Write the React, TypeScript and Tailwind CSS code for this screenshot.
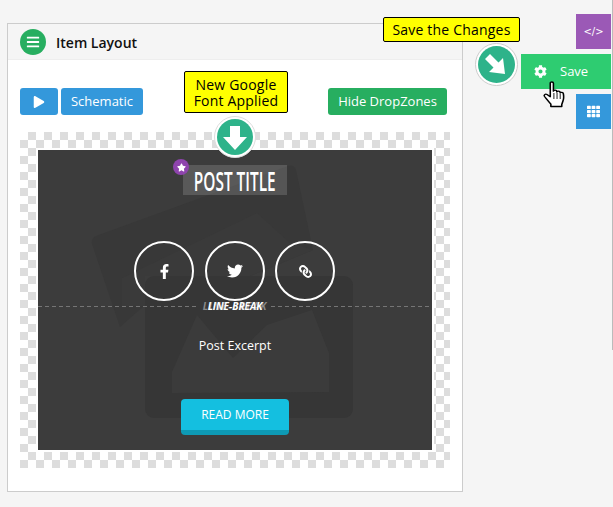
import { FaBars, FaCog, FaFacebookF, FaLink, FaPlay, FaStar, FaTh, FaTwitter } from "react-icons/fa";

const Hand = () => (
  <svg width="23" height="27" viewBox="0 0 19 27" preserveAspectRatio="none" className="absolute left-[22px] top-[27px]">
    <path
      d="M6 2.200c0-1.600 2.600-1.600 2.600 0v8c.3-1.400 2.700-1.300 2.800.2v.6c.4-1.300 2.600-1.200 2.800.3v.8c.5-1.100 2.400-.9 2.600.5 .3 2 .3 5.600-.3 7.400l-1 3.500v2H6.500v-2.300C5 20.800 3 18 1.300 15.500 .4 14.100 1.900 12.600 3.300 13.500L6 15.700z"
      fill="#fff"
      stroke="#000"
      strokeWidth="1.300"
      strokeLinejoin="round"
    />
    <path d="M9 12v6M11.600 12v6M14.200 13v5" stroke="#000" strokeWidth="0.800" />
  </svg>
);

const Watermark = () => (
  <svg width="394" height="300" viewBox="38 150 394 300" className="absolute left-0 top-0">
    <path d="M96 236 L288 166 Q294 164 296 170 L313 250 L250 276 L145 276 L145 305 L120 327 L92 244 Q91 238 96 236Z" fill="#383838" />
    <path d="M122 278 L257 213 L290 243 L313 250 L250 276 L145 276 L145 306 L122 306Z" fill="#3a3a3a" />
    <rect x="145" y="276" width="208" height="142" rx="9" fill="#363636" />
    <path d="M172 393 L172 372 L197 315 L233 358 L267 325 L312 310 L329 353 L329 392Z" fill="#3b3b3b" />
  </svg>
);

const Dashes = () => (
  <div className="h-px flex-1 bg-[repeating-linear-gradient(90deg,#757575_0_4px,transparent_4px_7px)]" />
);

export default function App() {
  return (
    <div className="relative flex h-[507px] w-[613px] items-start overflow-hidden bg-[#f5f5f5] font-['Open_Sans','Noto_Sans',sans-serif] text-black">
      <div className="ml-[7px] mt-[23px] h-[469px] w-[456px] border border-[#ccc] bg-white">
        <div className="flex h-[36px] items-center gap-[10px] border-b border-[#eee] bg-[#f5f5f5] pl-3">
          <span className="flex h-[26px] w-[26px] items-center justify-center rounded-full bg-[#27ae60] text-[14px] text-white">
            <FaBars />
          </span>
          <span className="pt-[2px] text-[14px] font-semibold text-[#111]">Item Layout</span>
        </div>

        <div className="px-3">
          <div className="mt-[28px] flex h-[27px] gap-[3px] text-[13px] text-white">
            <button className="flex w-[38px] items-center justify-center rounded-[3px] bg-[#3498db] text-[12px]">
              <FaPlay />
            </button>
            <button className="w-[82px] rounded-[3px] bg-[#3498db]">Schematic</button>
            <button className="ml-[182px] w-[119px] rounded-[3px] bg-[#27ae60]">Hide DropZones</button>
          </div>

          <div className="mt-[17px] h-[336px] w-[430px] bg-[conic-gradient(#ddd_25%,#fff_0_50%,#ddd_0_75%,#fff_0)] bg-[length:16px_16px] p-[18px]">
            <div className="relative flex h-[300px] w-[394px] flex-col items-center bg-[#3c3c3c] outline-2 outline-white">
              <Watermark />

              <div className="relative mt-[15px] flex h-[30px] w-[104px] items-center justify-center bg-white/15">
                <span className="inline-block scale-x-[0.57] whitespace-nowrap font-['Open_Sans',sans-serif] text-[27px] font-semibold leading-none text-white">
                  POST TITLE
                </span>
                <span className="absolute left-[-10px] top-[-6px] flex h-4 w-4 items-center justify-center rounded-full bg-[#8e44ad] text-[9px] text-white">
                  <FaStar />
                </span>
              </div>

              <div className="relative mt-[46px] flex gap-[10.500px] pr-[1px] text-white">
                <span className="flex h-[60px] w-[60px] items-center justify-center rounded-full border-2 border-white text-[15px]">
                  <FaFacebookF />
                </span>
                <span className="flex h-[60px] w-[60px] items-center justify-center rounded-full border-2 border-white text-[16px]">
                  <FaTwitter />
                </span>
                <span className="flex h-[60px] w-[60px] items-center justify-center rounded-full border-2 border-white text-[13px]">
                  <FaLink className="scale-x-[-1]" />
                </span>
              </div>

              <div className="relative mt-[-1px] flex h-[12px] w-full items-center">
                <Dashes />
                <div className="relative mx-[4px] flex w-[64px] justify-center whitespace-nowrap text-[10px] font-bold italic leading-[12px] text-white">
                  <span className="absolute inset-0 flex justify-center tracking-[1px] text-[#8a8a8a]">LINE-BREAK</span>
                  <span className="relative">LINE-BREAK</span>
                </div>
                <Dashes />
              </div>

              <p className="relative mt-[25px] text-[12.500px] leading-[18px] text-white">Post Excerpt</p>

              <button className="relative mt-[44px] h-[36px] w-[108px] rounded-[4px] border-b-[5px] border-[#0e9ab5] bg-[#14bfe0] pt-[1px] text-[12px] text-white">
                READ MORE
              </button>
            </div>
          </div>
        </div>
      </div>

      <div className="ml-auto mr-[2px] mt-[14px] flex flex-col items-end gap-[5px] text-white">
        <div className="flex h-[35px] w-[35px] items-center justify-center bg-[#9b59b6] font-['DejaVu_Sans',sans-serif] text-[10px]">&lt;/&gt;</div>
        <div className="relative flex h-[35px] w-[90px] items-center gap-[13px] bg-[#2ecc71] pl-[13px] text-[13px]">
          <FaCog className="text-[13px]" />
          <span>Save</span>
          <Hand />
        </div>
        <div className="flex h-[35px] w-[35px] items-center justify-center bg-[#3498db] text-[13px]">
          <FaTh />
        </div>
      </div>

      {/* page edge */}
      <div className="absolute right-0 top-0 h-[350px] w-px bg-[#bbb]" />

      {/* annotations */}
      <div className="absolute left-[184px] top-[71px] w-[104px] rounded-[2px] border border-black bg-[#ffff00] pb-[3px] pt-[5px] text-center text-[14px] leading-[16px] tracking-[0.2px]">
        New Google
        <br />
        Font Applied
      </div>
      <div className="absolute left-[383px] top-[17px] flex h-[25px] w-[137px] items-center justify-center rounded-[2px] border border-black bg-[#ffff00] text-[14px] tracking-[0.2px]">
        Save the Changes
      </div>

      <div className="absolute left-[214px] top-[116px] flex h-[42px] w-[42px] items-center justify-center rounded-full border border-[#ddd] bg-white">
        <svg width="36" height="36" viewBox="0 0 36 36">
          <circle cx="18" cy="18" r="18" fill="#2eb38a" />
          <path d="M13 7h10v11h7L18 31 6 18h7z" fill="#fff" />
        </svg>
      </div>
      <div className="absolute left-[475px] top-[43px] flex h-[43px] w-[43px] items-center justify-center rounded-full border border-[#ccc] bg-white">
        <svg width="37" height="37" viewBox="0 0 37 37">
          <circle cx="18.500" cy="18.500" r="18.500" fill="#2eb38a" />
          <path d="M7 13l5-5 8.500 8.500 4.500-4.500 2 16-16-2 4.500-4.500z" fill="#fff" />
        </svg>
      </div>
    </div>
  );
}
